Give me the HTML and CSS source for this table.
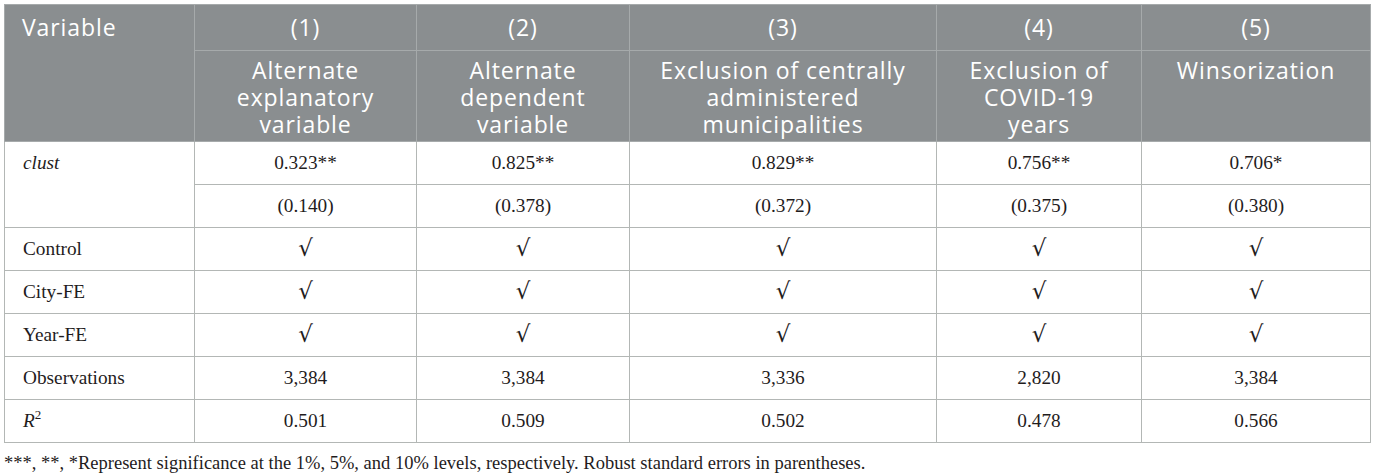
FILE: index.html
```html
<!DOCTYPE html>
<html lang="en">
<head>
<meta charset="utf-8">
<title>Robustness tests</title>
<link rel="stylesheet" href="styles.css">
</head>
<body>
<div class="wrap">
<table class="results">
  <colgroup>
    <col class="c0"><col class="c1"><col class="c2"><col class="c3"><col class="c4"><col class="c5">
  </colgroup>
  <thead>
    <tr class="h1">
      <th rowspan="2" class="var">Variable</th>
      <th>(1)</th><th>(2)</th><th>(3)</th><th>(4)</th><th>(5)</th>
    </tr>
    <tr class="h2">
      <th>Alternate<br>explanatory<br>variable</th>
      <th>Alternate<br>dependent<br>variable</th>
      <th>Exclusion of centrally<br>administered<br>municipalities</th>
      <th>Exclusion of<br>COVID-19<br>years</th>
      <th>Winsorization</th>
    </tr>
  </thead>
  <tbody>
    <tr>
      <td rowspan="2" class="label top"><i>clust</i></td>
      <td>0.323**</td><td>0.825**</td><td>0.829**</td><td>0.756**</td><td>0.706*</td>
    </tr>
    <tr>
      <td>(0.140)</td><td>(0.378)</td><td>(0.372)</td><td>(0.375)</td><td>(0.380)</td>
    </tr>
    <tr>
      <td class="label">Control</td>
      <td><span class="chk">√</span></td><td><span class="chk">√</span></td><td><span class="chk">√</span></td><td><span class="chk">√</span></td><td><span class="chk">√</span></td>
    </tr>
    <tr>
      <td class="label">City-FE</td>
      <td><span class="chk">√</span></td><td><span class="chk">√</span></td><td><span class="chk">√</span></td><td><span class="chk">√</span></td><td><span class="chk">√</span></td>
    </tr>
    <tr>
      <td class="label">Year-FE</td>
      <td><span class="chk">√</span></td><td><span class="chk">√</span></td><td><span class="chk">√</span></td><td><span class="chk">√</span></td><td><span class="chk">√</span></td>
    </tr>
    <tr>
      <td class="label">Observations</td>
      <td>3,384</td><td>3,384</td><td>3,336</td><td>2,820</td><td>3,384</td>
    </tr>
    <tr>
      <td class="label"><i>R</i><sup>2</sup></td>
      <td>0.501</td><td>0.509</td><td>0.502</td><td>0.478</td><td>0.566</td>
    </tr>
  </tbody>
</table>
<p class="note">***, **, *Represent significance at the 1%, 5%, and 10% levels, respectively. Robust standard errors in parentheses.</p>
</div>
</body>
</html>
```
FILE: styles.css
```css
html, body {
  margin: 0;
  padding: 0;
  background: #ffffff;
}
.wrap {
  padding: 4px 0 0 4px;
}
.results {
  border-collapse: collapse;
  table-layout: fixed;
  width: 1366px;
  border: 1px solid #b3b7b5;
}
.c0 { width: 190px; }
.c1 { width: 222px; }
.c2 { width: 213px; }
.c3 { width: 307px; }
.c4 { width: 205px; }
.c5 { width: 229px; }

.results th {
  background: #8a8e90;
  color: #ffffff;
  font-family: "Open Sans", "Noto Sans", sans-serif;
  font-weight: 400;
  font-size: 23px;
  letter-spacing: 0.9px;
  line-height: 27px;
  border: 1px solid #a6aaab;
  text-align: center;
  vertical-align: top;
  padding: 0 4px;
  box-sizing: border-box;
}
.results tr.h1 th {
  height: 46px;
  padding-top: 9px;
}
.results tr.h2 th {
  height: 91px;
  padding-top: 6px;
}
.results th.var {
  text-align: left;
  padding-left: 17px;
}
.results td {
  font-family: "Liberation Serif", "Times New Roman", serif;
  font-size: 19.3px;
  color: #1f1c1d;
  border: 1px solid #b3b7b5;
  text-align: center;
  vertical-align: middle;
  height: 43px;
  padding: 0 8px;
  box-sizing: border-box;
}
.results td.label {
  text-align: left;
  padding-left: 18px;
}
.results td.top {
  vertical-align: top;
  padding-top: 10px;
}
.results sup {
  font-size: 13px;
  line-height: 0;
  vertical-align: 8px;
}
.chk {
  font-family: "DejaVu Serif", serif;
  font-size: 23px;
  line-height: 1;
}
.note {
  margin: 10px 0 0 0;
  font-family: "Liberation Serif", "Times New Roman", serif;
  font-size: 18.5px;
  color: #1f1c1d;
}
```
